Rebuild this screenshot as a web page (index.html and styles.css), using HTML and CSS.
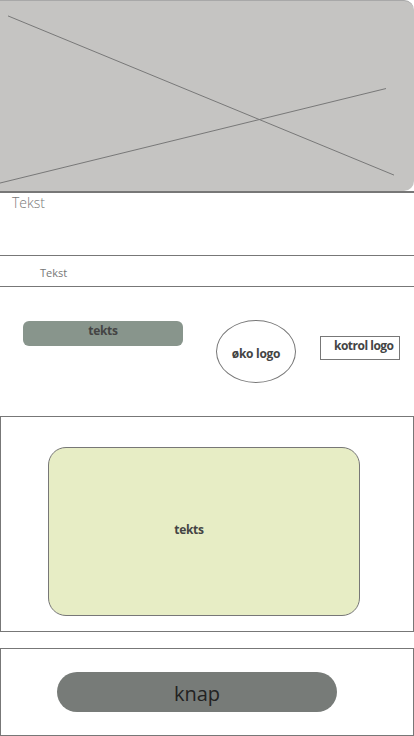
FILE: index.html
```html
<!DOCTYPE html>
<html lang="da">
<head>
<meta charset="utf-8">
<title>Wireframe</title>
<link rel="stylesheet" href="styles.css">
</head>
<body>
<div class="page">
  <div class="hero">
    <svg class="hero-x" viewBox="0 0 414 191" preserveAspectRatio="none">
      <line x1="8" y1="15" x2="394" y2="175" stroke="#777" stroke-width="1"/>
      <line x1="0" y1="183" x2="386" y2="88" stroke="#777" stroke-width="1"/>
    </svg>
  </div>
  <div class="text-block"><span class="text-lg">Tekst</span></div>
  <div class="text-row"><span class="text-sm">Tekst</span></div>
  <div class="logos">
    <div class="pill">tekts</div>
    <div class="oval">øko logo</div>
    <div class="ctrl">kotrol logo</div>
  </div>
  <div class="card-box">
    <div class="card">tekts</div>
  </div>
  <div class="btn-box">
    <div class="btn">knap</div>
  </div>
</div>
</body>
</html>
```
FILE: styles.css
```css
html, body {
  margin: 0;
  padding: 0;
  background: #fff;
}
.page {
  width: 414px;
  font-family: "Open Sans", "Noto Sans", sans-serif;
  color: #444;
}
.hero {
  height: 191px;
  background: #c5c4c2;
  border-top: 1px solid #a8a8a8;
  border-radius: 0 10px 10px 0;
  box-sizing: border-box;
  overflow: hidden;
}
.hero-x {
  display: block;
  width: 100%;
  height: 100%;
}
.text-block {
  height: 64px;
  border-top: 2px solid #777;
  box-sizing: border-box;
  padding: 2px 0 0 12px;
}
.text-lg {
  display: block;
  font-size: 14px;
  font-weight: 300;
  color: #777;
  line-height: 16px;
}
.text-row {
  height: 32px;
  border-top: 1px solid #777;
  border-bottom: 1px solid #777;
  box-sizing: border-box;
  padding: 4px 0 0 40px;
}
.text-sm {
  font-size: 11px;
  color: #777;
  line-height: 16px;
}
.logos {
  height: 129px;
  display: flex;
  align-items: flex-start;
}
.pill {
  margin: 34px 0 0 23px;
  width: 160px;
  height: 25px;
  background: #88958c;
  border-radius: 6px;
  text-align: center;
  font-size: 12px;
  font-weight: 700;
  color: #444;
  line-height: 17px;
  padding-top: 1px;
  box-sizing: border-box;
  letter-spacing: -0.3px;
}
.oval {
  margin: 33px 0 0 33px;
  width: 80px;
  height: 63px;
  border: 1px solid #777;
  border-radius: 50%;
  box-sizing: border-box;
  display: flex;
  align-items: center;
  justify-content: center;
  padding-top: 3px;
  font-size: 12px;
  font-weight: 700;
  color: #444;
  letter-spacing: -0.3px;
}
.ctrl {
  margin: 49px 0 0 24px;
  width: 80px;
  height: 24px;
  border: 1px solid #777;
  box-sizing: border-box;
  padding: 0 0 0 13px;
  font-size: 12px;
  font-weight: 700;
  color: #444;
  line-height: 18px;
  letter-spacing: -0.5px;
  white-space: nowrap;
}
.card-box {
  height: 216px;
  border: 1px solid #777;
  box-sizing: border-box;
  padding: 30px 0 0 47px;
}
.card {
  width: 312px;
  height: 169px;
  background: #e7edc5;
  border: 1px solid #777;
  border-radius: 18px;
  box-sizing: border-box;
  display: flex;
  align-items: center;
  justify-content: center;
  padding: 0 30px 4px 0;
  font-size: 12px;
  font-weight: 700;
  color: #444;
  letter-spacing: -0.3px;
}
.btn-box {
  margin-top: 16px;
  height: 88px;
  border: 1px solid #777;
  box-sizing: border-box;
  padding: 23px 0 0 56px;
}
.btn {
  width: 280px;
  height: 40px;
  background: #777b78;
  border-radius: 20px;
  display: flex;
  align-items: center;
  justify-content: center;
  padding-top: 2px;
  box-sizing: border-box;
  font-size: 20px;
  color: #222;
  font-weight: 400;
}
```
